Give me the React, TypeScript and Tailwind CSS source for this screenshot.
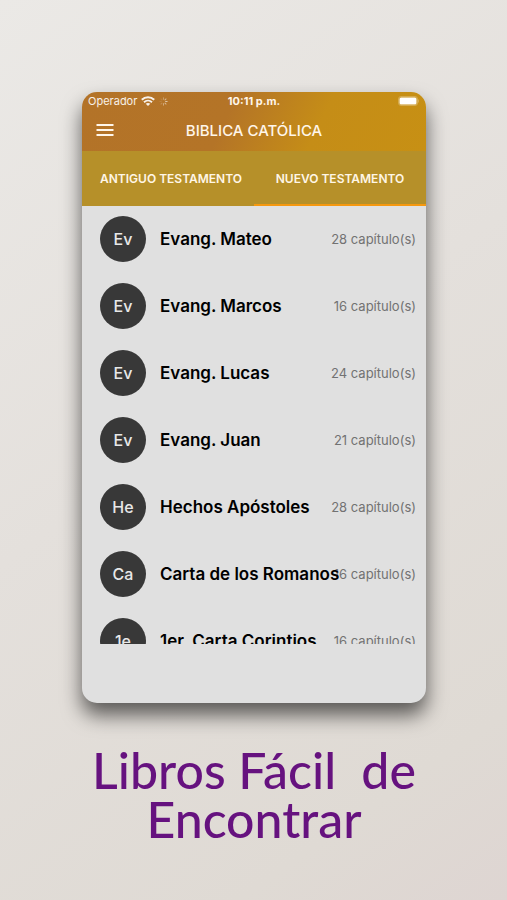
import { useState } from "react";

type Book = {
  name: string;
  chapters: number;
};

const newTestament: Book[] = [
  { name: "Evang. Mateo", chapters: 28 },
  { name: "Evang. Marcos", chapters: 16 },
  { name: "Evang. Lucas", chapters: 24 },
  { name: "Evang. Juan", chapters: 21 },
  { name: "Hechos Apóstoles", chapters: 28 },
  { name: "Carta de los Romanos", chapters: 16 },
  { name: "1er. Carta Corintios", chapters: 16 },
];

const oldTestament: Book[] = [
  { name: "Génesis", chapters: 50 },
  { name: "Éxodo", chapters: 40 },
  { name: "Levítico", chapters: 27 },
  { name: "Números", chapters: 36 },
  { name: "Deuteronomio", chapters: 34 },
  { name: "Josué", chapters: 24 },
  { name: "Jueces", chapters: 21 },
];

const tabs = [
  { id: "antiguo", label: "ANTIGUO TESTAMENTO", books: oldTestament },
  { id: "nuevo", label: "NUEVO TESTAMENTO", books: newTestament },
];

function WifiIcon() {
  return (
    <svg className="h-[10px] w-[14px]" viewBox="0 0 14 10" fill="none" stroke="currentColor" aria-hidden="true">
      <path d="M0.8 3.7C4.3 0.4 9.7 0.4 13.2 3.7" strokeWidth="2.1" />
      <path d="M3 6.2C5.3 4.1 8.7 4.1 11 6.2" strokeWidth="1.9" />
      <path d="M7 10L4.7 7.7C6 6.6 8 6.6 9.3 7.7Z" fill="currentColor" stroke="none" />
    </svg>
  );
}

function SpinnerIcon() {
  return (
    <svg className="h-[9px] w-[9px]" viewBox="0 0 10 10" stroke="#fff" strokeWidth="1.2" strokeLinecap="round" aria-hidden="true">
      <path d="M5 1V2.6" opacity="0.3" />
      <path d="M7.8 2.2L6.7 3.3" opacity="0.5" />
      <path d="M9 5H7.4" opacity="0.6" />
      <path d="M7.8 7.8L6.7 6.7" opacity="0.5" />
      <path d="M5 9V7.4" opacity="0.4" />
      <path d="M2.2 7.8L3.3 6.7" opacity="0.2" />
      <path d="M1 5H2.6" opacity="0.1" />
      <path d="M2.2 2.2L3.3 3.3" opacity="0.1" />
    </svg>
  );
}

function StatusBar() {
  return (
    <div className="grid h-[18px] grid-cols-3 items-center px-[6px] text-[11px] leading-[18px]">
      <div className="flex items-center gap-1 text-white/90">
        <span>Operador</span>
        <WifiIcon />
        <SpinnerIcon />
      </div>
      <span className="text-center font-bold whitespace-nowrap">10:11 p.m.</span>
      <svg className="h-[10px] w-[22px] justify-self-end" viewBox="0 0 22 10" aria-hidden="true">
        <rect x="0.5" y="0.5" width="19" height="9" rx="2.5" fill="none" stroke="#fff" opacity="0.25" />
        <rect x="1.5" y="1.5" width="17" height="7" rx="1.5" fill="#fff" />
        <path d="M20.5 3.5V6.5" stroke="#fff" opacity="0.25" />
      </svg>
    </div>
  );
}

function BookRow({ book }: { book: Book }) {
  return (
    <li className="flex h-[67px] items-center pr-[10px] pb-px pl-[18px]">
      <span className="flex size-[46px] shrink-0 items-center justify-center rounded-full bg-[#383838] text-base font-medium text-[#e8e8e8]">
        {book.name.slice(0, 2)}
      </span>
      {/* long names run over the chapter count instead of wrapping */}
      <span className="relative ml-[14px] min-w-0 flex-1 pt-px text-[17px] font-semibold whitespace-nowrap text-black">
        {book.name}
      </span>
      <span className="shrink-0 pt-[2px] text-[13px] text-[#727272]">{book.chapters} capítulo(s)</span>
    </li>
  );
}

export default function App() {
  const [active, setActive] = useState("nuevo");
  const books = tabs.find((tab) => tab.id === active)?.books ?? [];

  return (
    <main className="min-h-screen bg-linear-[145deg,#ebe9e6_0%,#e4e0dc_45%,#dfdad4_85%,#ded5d2_100%] pt-[92px] pr-[81px] pl-[82px] font-[Inter,'Liberation_Sans',sans-serif]">
      <section className="overflow-hidden rounded-[15px] bg-[#e0e0e0] shadow-[0_12px_20px_rgba(0,0,0,0.6)]">
        <header className="bg-linear-[115deg,#b37328_0%,#b47427_42%,#c58d17_68%,#c79014_100%] text-[#fff6ea]">
          <StatusBar />
          <div className="grid h-[41px] grid-cols-[40px_1fr_40px] items-center">
            <button type="button" aria-label="Menú" className="flex h-full items-center pb-px pl-[14px]">
              <svg className="h-[12px] w-[18px]" viewBox="0 0 18 12" stroke="currentColor" strokeWidth="2" aria-hidden="true">
                <path d="M0.5 1H17.5M0.5 6H17.5M0.5 11H17.5" />
              </svg>
            </button>
            <h1 className="pt-px text-center text-[15px] font-medium whitespace-nowrap">BIBLICA CATÓLICA</h1>
          </div>
        </header>

        <div role="tablist" className="grid h-[55px] grid-cols-2 bg-[#b69029]">
          {tabs.map((tab) => (
            <button
              key={tab.id}
              type="button"
              role="tab"
              aria-selected={active === tab.id}
              onClick={() => setActive(tab.id)}
              className={`border-b-2 pt-[2px] text-[12px] font-semibold whitespace-nowrap text-[#fff6e6] first:pl-[6px] ${
                active === tab.id ? "border-[#f5980f]" : "border-transparent"
              }`}
            >
              {tab.label}
            </button>
          ))}
        </div>

        <ul className="h-[438px] overflow-hidden">
          {books.map((book) => (
            <BookRow key={book.name} book={book} />
          ))}
        </ul>
        <div className="h-[59px]" />
      </section>

      <h2 className="mt-[43px] text-center font-[Lato,sans-serif] text-[50px] leading-[49px] font-medium whitespace-pre text-[#66127f]">
        {"Libros Fácil  de\nEncontrar"}
      </h2>
    </main>
  );
}
